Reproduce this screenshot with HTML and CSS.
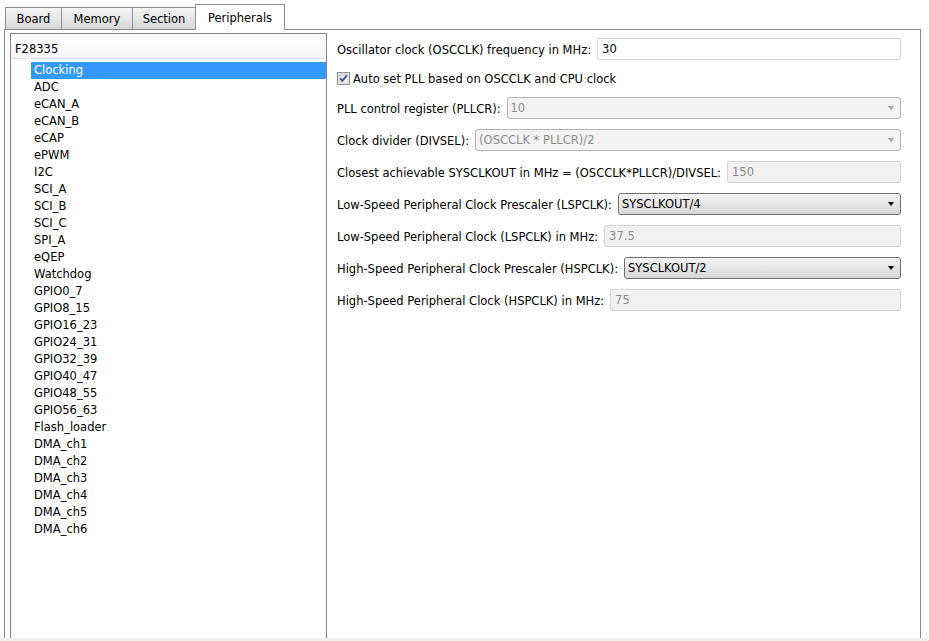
FILE: index.html
```html
<!DOCTYPE html>
<html lang="en">
<head>
<meta charset="utf-8">
<title>Peripherals</title>
<link rel="stylesheet" href="styles.css">
</head>
<body>
<div class="tabs">
  <div class="tab tab-board">Board</div>
  <div class="tab tab-memory">Memory</div>
  <div class="tab tab-section">Section</div>
  <div class="tab tab-active">Peripherals</div>
</div>
<div class="panel">
  <div class="tree">
    <div class="tree-head">F28335</div>
    <ul class="tree-list">
      <li class="sel">Clocking</li>
      <li>ADC</li>
      <li>eCAN_A</li>
      <li>eCAN_B</li>
      <li>eCAP</li>
      <li>ePWM</li>
      <li>I2C</li>
      <li>SCI_A</li>
      <li>SCI_B</li>
      <li>SCI_C</li>
      <li>SPI_A</li>
      <li>eQEP</li>
      <li>Watchdog</li>
      <li>GPIO0_7</li>
      <li>GPIO8_15</li>
      <li>GPIO16_23</li>
      <li>GPIO24_31</li>
      <li>GPIO32_39</li>
      <li>GPIO40_47</li>
      <li>GPIO48_55</li>
      <li>GPIO56_63</li>
      <li>Flash_loader</li>
      <li>DMA_ch1</li>
      <li>DMA_ch2</li>
      <li>DMA_ch3</li>
      <li>DMA_ch4</li>
      <li>DMA_ch5</li>
      <li>DMA_ch6</li>
    </ul>
  </div>
  <div class="form">
    <div class="row">
      <span class="label">Oscillator clock (OSCCLK) frequency in MHz:</span>
      <div class="field input">30</div>
    </div>
    <div class="row row-check">
      <span class="checkbox">
        <svg width="13" height="13" viewBox="0 0 13 13">
          <defs>
            <linearGradient id="cbg" x1="0" y1="0" x2="1" y2="1">
              <stop offset="0" stop-color="#dcdde2"/>
              <stop offset="1" stop-color="#fbfbfc"/>
            </linearGradient>
          </defs>
          <rect x="0.5" y="0.5" width="12" height="12" fill="#f4f4f4" stroke="#8e8f8f"/>
          <rect x="2" y="2" width="9" height="9" fill="url(#cbg)" stroke="#b6bac4" stroke-width="0.6"/>
          <path d="M3.2 6.4 L5.4 8.8 L9.8 3.4" fill="none" stroke="#3b4d8c" stroke-width="1.8"/>
        </svg>
      </span>
      <span class="label">Auto set PLL based on OSCCLK and CPU clock</span>
    </div>
    <div class="row">
      <span class="label">PLL control register (PLLCR):</span>
      <div class="field select disabled"><span>10</span><span class="arrow"></span></div>
    </div>
    <div class="row">
      <span class="label">Clock divider (DIVSEL):</span>
      <div class="field select disabled"><span>(OSCCLK * PLLCR)/2</span><span class="arrow"></span></div>
    </div>
    <div class="row">
      <span class="label">Closest achievable SYSCLKOUT in MHz = (OSCCLK*PLLCR)/DIVSEL:</span>
      <div class="field input disabled">150</div>
    </div>
    <div class="row">
      <span class="label">Low-Speed Peripheral Clock Prescaler (LSPCLK):</span>
      <div class="field select"><span>SYSCLKOUT/4</span><span class="arrow"></span></div>
    </div>
    <div class="row">
      <span class="label">Low-Speed Peripheral Clock (LSPCLK) in MHz:</span>
      <div class="field input disabled">37.5</div>
    </div>
    <div class="row">
      <span class="label">High-Speed Peripheral Clock Prescaler (HSPCLK):</span>
      <div class="field select"><span>SYSCLKOUT/2</span><span class="arrow"></span></div>
    </div>
    <div class="row">
      <span class="label">High-Speed Peripheral Clock (HSPCLK) in MHz:</span>
      <div class="field input disabled">75</div>
    </div>
  </div>
</div>
<div class="status"></div>
</body>
</html>
```

FILE: styles.css
```css
html, body {
  margin: 0;
  padding: 0;
}

body {
  width: 929px;
  height: 641px;
  overflow: hidden;
  background: #ffffff;
  color: #000000;
  font-family: "DejaVu Sans", "Liberation Sans", sans-serif;
  font-size: 11.5px;
}

/* ---------- tabs ---------- */
.tabs {
  display: flex;
  align-items: flex-end;
  height: 29px;
  padding-left: 5px;
  position: relative;
  z-index: 2;
}

.tab {
  box-sizing: border-box;
  height: 22px;
  padding-top: 1px;
  line-height: 21px;
  text-align: center;
  border-top: 1px solid #8e8f8f;
  border-left: 1px solid #8e8f8f;
  background: linear-gradient(to bottom, #f4f4f4 0%, #e6e6e6 55%, #d8d8d8 100%);
  color: #000;
}

.tab-board { width: 56px; }
.tab-memory { width: 71px; }
.tab-section { width: 64px; border-right: 1px solid #8e8f8f; }

.tab-active {
  width: 90px;
  height: 26px;
  padding-top: 1px;
  line-height: 24px;
  margin-left: -1px;
  margin-bottom: -1px;
  border: 1px solid #8e8f8f;
  border-bottom: none;
  background: #ffffff;
}

/* ---------- panel ---------- */
.panel {
  box-sizing: border-box;
  margin-left: 4px;
  width: 917px;
  height: 609px;
  border: 1px solid #898c95;
  border-bottom: none;
  padding: 3px 19px 0 5px;
  display: flex;
  gap: 10px;
  background: #ffffff;
}

/* ---------- tree ---------- */
.tree {
  box-sizing: border-box;
  width: 317px;
  flex: none;
  border: 1px solid #828790;
  border-bottom: none;
  background: #ffffff;
}

.tree-head {
  box-sizing: border-box;
  height: 25px;
  padding: 7px 0 0 4px;
  line-height: 17px;
  border-bottom: 1px solid #e2e2e2;
  background: linear-gradient(to bottom, #ffffff 0%, #f6f6f6 100%);
}

.tree-list {
  list-style: none;
  margin: 3px 0 0 0;
  padding: 0;
}

.tree-list li {
  height: 17px;
  line-height: 17px;
  margin-left: 20px;
  padding-left: 3px;
  white-space: nowrap;
}

.tree-list li.sel {
  background: #3399ff;
  color: #ffffff;
}

/* ---------- form ---------- */
.form {
  flex: 1;
  display: flex;
  flex-direction: column;
  gap: 10px;
  padding-top: 5px;
}

.row {
  display: flex;
  align-items: center;
  gap: 6px;
  height: 22px;
}

.row-check {
  height: 17px;
  gap: 3px;
}

.label {
  white-space: nowrap;
  padding-top: 1px;
}

.checkbox {
  display: flex;
  width: 13px;
  height: 13px;
}

.field {
  box-sizing: border-box;
  flex: 1;
  height: 22px;
  display: flex;
  align-items: center;
  white-space: nowrap;
}

.input {
  padding-left: 4px;
  border: 1px solid #d8d8d8;
  border-top-color: #cfcfcf;
  border-radius: 2px;
  background: #ffffff;
}

.input.disabled {
  background: #f1f1f1;
  border-color: #d6d6d6;
  color: #8c8c8c;
}

.select {
  justify-content: space-between;
  padding: 0 6px 0 3px;
  border: 1px solid #707070;
  border-radius: 3px;
  background: linear-gradient(to bottom, #f3f3f3 0%, #e6e6e6 50%, #d6d6d6 100%);
  color: #000;
}

.select.disabled {
  border-color: #b3b6ba;
  background: #f3f3f3;
  color: #8c8c8c;
}

.arrow {
  width: 0;
  height: 0;
  border-left: 3.5px solid transparent;
  border-right: 3.5px solid transparent;
  border-top: 4px solid #000000;
}

.select.disabled .arrow {
  border-top-color: #a3a3a3;
}

/* ---------- bottom strip ---------- */
.status {
  height: 3px;
  background: #f0f0f0;
}
```
